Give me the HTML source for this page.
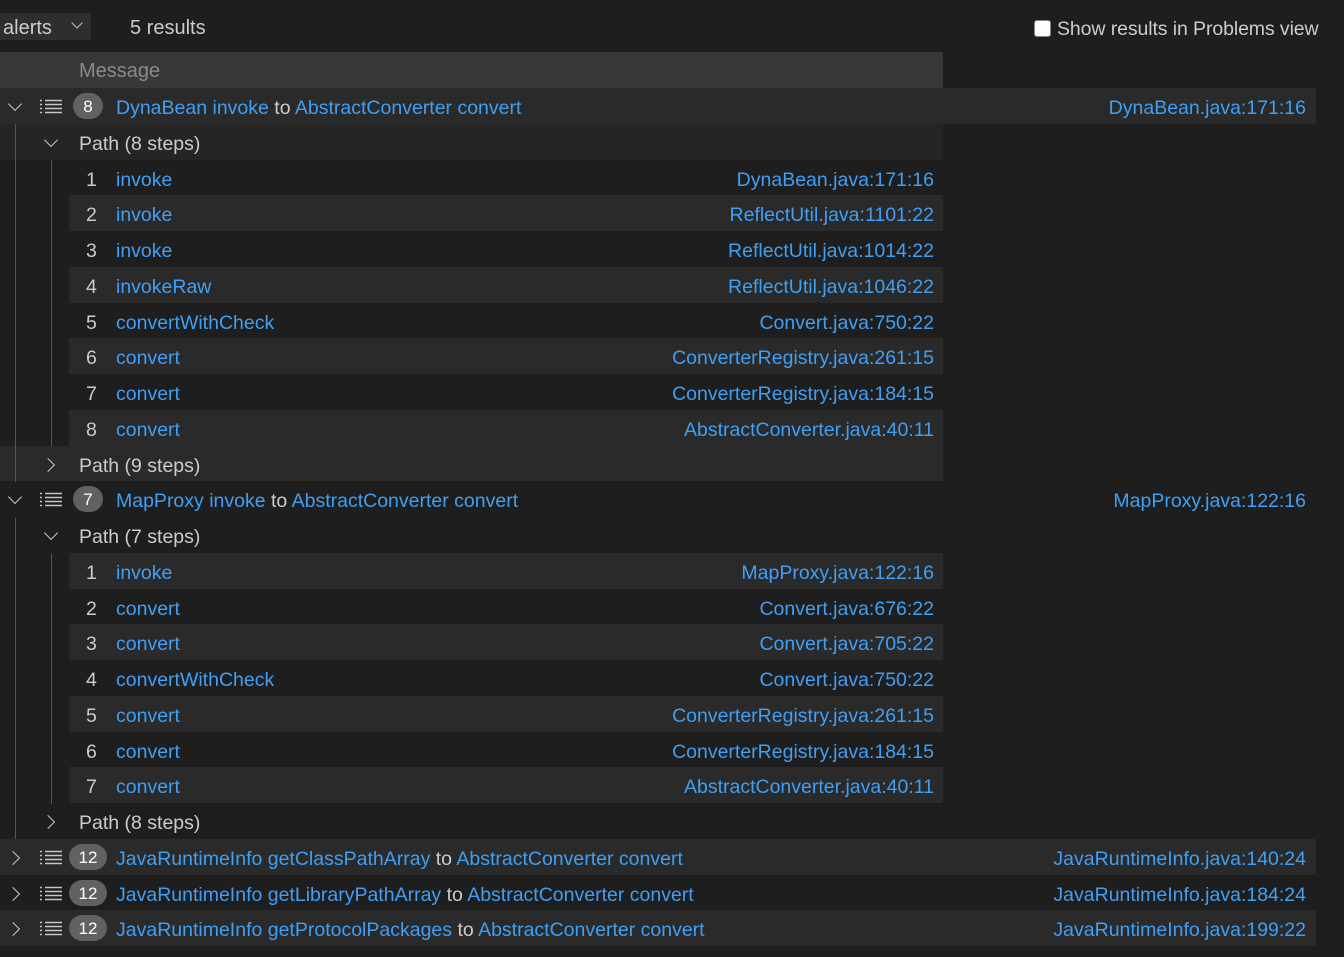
<!DOCTYPE html>
<html><head><meta charset="utf-8"><style>
body{margin:0;background:#1e1e1e;width:1344px;height:957px;overflow:hidden;font-family:"Liberation Sans",sans-serif;font-size:19.5px;color:#cccccc;position:relative}
.a{position:absolute}
.blue{color:#3ea0f5}
.row{position:absolute;height:36px;line-height:40px;white-space:nowrap}
.loc{position:absolute;right:0;top:0;color:#3ea0f5}
.badge{position:absolute;top:5px;height:26px;line-height:27px;border-radius:13px;background:#616161;color:#fff;text-align:center;font-size:17px}
.chev{position:absolute;top:11px;width:9px;height:9px;border-right:1.6px solid #c5c5c5;border-bottom:1.6px solid #c5c5c5}
.down{transform:rotate(45deg)}
.right{transform:rotate(-45deg)}
.list{position:absolute;top:11px;left:40px;width:22px;height:16px}
</style></head><body>
<div class="a" style="left:0;top:13px;width:91px;height:27px;background:#2e2e2e"></div>
<div class="a" style="left:3px;top:17px;font-size:20px">alerts</div>
<div class="chev down" style="left:73px;top:19px;width:7px;height:7px"></div>
<div class="a" style="left:130px;top:17px;font-size:20px">5 results</div>
<div class="a" style="left:1034px;top:20px;width:15px;height:15px;background:#fff;border-radius:3px;border:1px solid #888"></div>
<div class="a" style="left:1057px;top:18px;font-size:19.5px;letter-spacing:-0.1px">Show results in Problems view</div>
<div class="a" style="left:0;top:52px;width:943px;height:36px;background:#383838"></div>
<div class="a" style="left:79px;top:60px;color:#8a8a8a;font-size:20px">Message</div>
<div id="rows"></div>
<div class="a" style="left:15px;top:124px;width:1px;height:358px;background:#555"></div>
<div class="a" style="left:51px;top:160px;width:1px;height:286px;background:#555"></div>
<div class="a" style="left:15px;top:518px;width:1px;height:321px;background:#555"></div>
<div class="a" style="left:51px;top:554px;width:1px;height:250px;background:#555"></div>
<script>
const H=35.75,T=88;let h='';
const list='<svg class="list" viewBox="0 0 22 16"><g stroke="#c5c5c5" stroke-width="1.4"><path d="M0 1.5h2M0 5.5h2M0 9.5h2M0 13.5h2M5 1.5h17M5 5.5h17M5 9.5h17M5 13.5h17"/></g></svg>';
function alert(i,n,a,b,c,d,loc,open,bg){let y=T+i*H,w=n>9?38:30,l=n>9?69:73;
h+=`<div class="row" style="left:0;top:${y}px;width:1316px;background:${bg}"><div class="chev ${open?'down':'right'}" style="left:${open?10:8}px;top:${open?11:14}px"></div>${list}<div class="badge" style="left:${l}px;width:${w}px">${n}</div><span class="a" style="left:116px"><span class="blue">${a} ${b}</span> to <span class="blue">${c} ${d}</span></span><span class="loc" style="right:10px">${loc}</span></div>`}
function path(i,n,open,bg){let y=T+i*H;h+=`<div class="row" style="left:0;top:${y}px;width:943px;background:${bg}"><div class="chev ${open?'down':'right'}" style="left:${open?46:43}px;top:${open?11:14}px"></div><span class="a" style="left:79px">Path (${n} steps)</span></div>`}
function step(i,n,f,loc,bg){let y=T+i*H;h+=`<div class="row" style="left:69px;top:${y}px;width:874px;background:${bg}"><span class="a" style="left:17px">${n}</span><span class="a blue" style="left:47px">${f}</span><span class="loc" style="right:9px">${loc}</span></div>`}
const L='#2a2a2a',D='#1e1e1e',P='#252526';
alert(0,8,'DynaBean','invoke','AbstractConverter','convert','DynaBean.java:171:16',1,L);
path(1,8,1,P);
[['invoke','DynaBean.java:171:16'],['invoke','ReflectUtil.java:1101:22'],['invoke','ReflectUtil.java:1014:22'],['invokeRaw','ReflectUtil.java:1046:22'],['convertWithCheck','Convert.java:750:22'],['convert','ConverterRegistry.java:261:15'],['convert','ConverterRegistry.java:184:15'],['convert','AbstractConverter.java:40:11']].forEach((s,k)=>step(2+k,k+1,s[0],s[1],k%2?L:D));
path(10,9,0,L);
alert(11,7,'MapProxy','invoke','AbstractConverter','convert','MapProxy.java:122:16',1,D);
path(12,7,1,D);
[['invoke','MapProxy.java:122:16'],['convert','Convert.java:676:22'],['convert','Convert.java:705:22'],['convertWithCheck','Convert.java:750:22'],['convert','ConverterRegistry.java:261:15'],['convert','ConverterRegistry.java:184:15'],['convert','AbstractConverter.java:40:11']].forEach((s,k)=>step(13+k,k+1,s[0],s[1],k%2?D:L));
path(20,8,0,D);
alert(21,12,'JavaRuntimeInfo','getClassPathArray','AbstractConverter','convert','JavaRuntimeInfo.java:140:24',0,L);
alert(22,12,'JavaRuntimeInfo','getLibraryPathArray','AbstractConverter','convert','JavaRuntimeInfo.java:184:24',0,D);
alert(23,12,'JavaRuntimeInfo','getProtocolPackages','AbstractConverter','convert','JavaRuntimeInfo.java:199:22',0,L);
document.getElementById('rows').innerHTML=h;
</script>
</body></html>
